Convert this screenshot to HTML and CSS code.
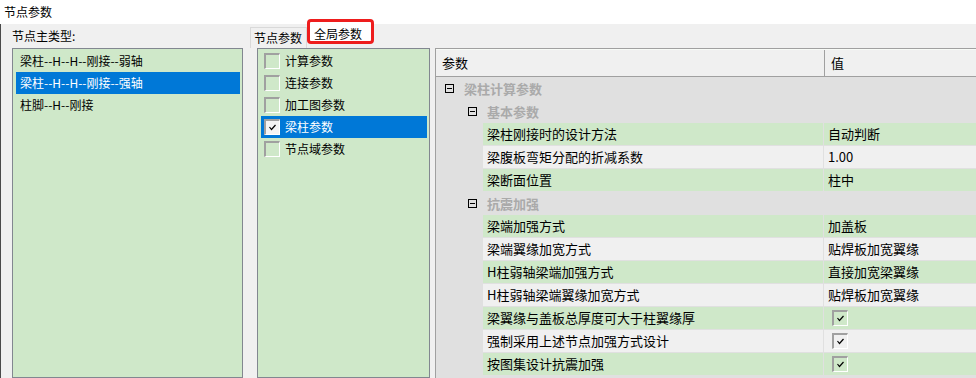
FILE: index.html
```html
<!DOCTYPE html>
<html>
<head>
  <meta charset="utf-8">
  <title>节点参数</title>
  <link rel="stylesheet" href="styles.css">
</head>
<body class="nd">
  <div class="nd-title">节点参数</div>
  <div class="nd-main">
    <div class="nd-types">
      <div class="nd-label">节点主类型:</div>
      <ul class="nd-list nd-typelist">
        <li>梁柱--H--H--刚接--弱轴</li>
        <li class="sel">梁柱--H--H--刚接--强轴</li>
        <li>柱脚--H--刚接</li>
      </ul>
    </div>

    <div class="nd-tabs">
      <div class="nd-tabbar">
        <span class="nd-tab">节点参数</span>
        <span class="nd-tab active">全局参数</span>
      </div>
      <div class="nd-page">
        <ul class="nd-list nd-checks">
          <li><span class="cb"></span>计算参数</li>
          <li><span class="cb"></span>连接参数</li>
          <li><span class="cb"></span>加工图参数</li>
          <li class="sel"><span class="cb on"><svg viewBox="0 0 13 13"><polyline points="3.5,6 5.5,8.5 9.5,4"/></svg></span>梁柱参数</li>
          <li><span class="cb"></span>节点域参数</li>
        </ul>

        <div class="nd-grid">
          <div class="g-head">
            <div class="h-name">参数</div>
            <div class="h-val">值</div>
          </div>
          <div class="g-group lv1"><i class="fold"></i>梁柱计算参数</div>
          <div class="g-group lv2"><i class="fold"></i>基本参数</div>
          <div class="g-row green"><div class="g-name">梁柱刚接时的设计方法</div><div class="g-val">自动判断</div></div>
          <div class="g-row"><div class="g-name">梁腹板弯矩分配的折减系数</div><div class="g-val">1.00</div></div>
          <div class="g-row green"><div class="g-name">梁断面位置</div><div class="g-val">柱中</div></div>
          <div class="g-group lv2"><i class="fold"></i>抗震加强</div>
          <div class="g-row green"><div class="g-name">梁端加强方式</div><div class="g-val">加盖板</div></div>
          <div class="g-row"><div class="g-name">梁端翼缘加宽方式</div><div class="g-val">贴焊板加宽翼缘</div></div>
          <div class="g-row green"><div class="g-name">H柱弱轴梁端加强方式</div><div class="g-val">直接加宽梁翼缘</div></div>
          <div class="g-row"><div class="g-name">H柱弱轴梁端翼缘加宽方式</div><div class="g-val">贴焊板加宽翼缘</div></div>
          <div class="g-row green"><div class="g-name">梁翼缘与盖板总厚度可大于柱翼缘厚</div><div class="g-val"><span class="cb on"><svg viewBox="0 0 13 13"><polyline points="3.5,6 5.5,8.5 9.5,4"/></svg></span></div></div>
          <div class="g-row"><div class="g-name">强制采用上述节点加强方式设计</div><div class="g-val"><span class="cb on"><svg viewBox="0 0 13 13"><polyline points="3.5,6 5.5,8.5 9.5,4"/></svg></span></div></div>
          <div class="g-row green"><div class="g-name">按图集设计抗震加强</div><div class="g-val"><span class="cb on"><svg viewBox="0 0 13 13"><polyline points="3.5,6 5.5,8.5 9.5,4"/></svg></span></div></div>
        </div>
      </div>
    </div>
  </div>
</body>
</html>
```

FILE: styles.css
```css
*,
*::before,
*::after {
  box-sizing: border-box;
}

.nd {
  margin: 0;
  height: 378px;
  overflow: hidden;
  display: flex;
  flex-direction: column;
  background: #f0f0f0;
  color: #000;
  font-family: "Noto Sans CJK SC", "Liberation Sans", sans-serif;
  font-size: 12px;
}

.nd-title {
  height: 24px;
  line-height: 24px;
  padding-left: 4px;
  background: #fff;
}

.nd-main {
  flex: 1;
  min-height: 0;
  display: flex;
  border-left: 1px solid #4a4a4a;
}

/* left: main type list */
.nd-types {
  width: 248px;
  display: flex;
  flex-direction: column;
  padding-left: 11px;
}

.nd-label {
  height: 24px;
  line-height: 24px;
}

.nd-list {
  margin: 0;
  padding: 1px 2px 0 3px;
  list-style: none;
  border: 1px solid #828790;
  background: #cfe8c9;
}

.nd-list li {
  height: 22px;
  line-height: 22px;
  padding-left: 4px;
  white-space: nowrap;
}

.nd-list li.sel {
  background: #0078d7;
  color: #fff;
}

.nd-typelist {
  width: 231px;
  flex: 1;
}

/* right: tabs */
.nd-tabs {
  flex: 1;
  display: flex;
  flex-direction: column;
}

.nd-tabbar {
  height: 24px;
  display: flex;
  align-items: flex-start;
  padding-left: 1px;
}

.nd-tab {
  margin-top: 3px;
  height: 21px;
  line-height: 20px;
  padding: 0 4px 0 3px;
  border-left: 1px solid #d9d9d9;
  border-top: 1px solid #d9d9d9;
  border-right: 1px solid #d9d9d9;
}

.nd-tab.active {
  margin-top: -5px;
  height: 25px;
  line-height: 17px;
  padding: 3px 9px 0 4px;
  background: #fff;
  border: 3px solid #ee1d1d;
  border-radius: 4px;
}

.nd-page {
  flex: 1;
  min-height: 0;
  display: flex;
  padding-left: 8px;
}

.nd-checks {
  width: 173px;
}

.nd-checks li {
  display: flex;
  align-items: center;
  padding-left: 3px;
}

.cb {
  width: 16px;
  height: 16px;
  flex: none;
  display: inline-flex;
  align-items: center;
  justify-content: center;
  border-style: solid;
  border-width: 2px 1px 1px 2px;
  border-color: #a0a0a0 #fff #fff #a0a0a0;
}

.nd-checks .cb {
  margin-right: 5px;
}

.nd-checks .cb.on {
  background: #f4f4f4;
}

.cb svg {
  width: 13px;
  height: 13px;
}

.cb polyline {
  fill: none;
  stroke: #000;
  stroke-width: 1.2;
}

/* property grid */
.nd-grid {
  flex: 1;
  margin-left: 5px;
  border-left: 1px solid #a0a0a0;
  border-top: 1px solid #a0a0a0;
  background: #e0e0e0;
  font-size: 13px;
}

.g-head {
  display: flex;
  height: 28px;
  line-height: 26px;
  border-top: 1px solid #f8fbf7;
  border-bottom: 1px solid #a0a0a0;
  background: #f0f0f0;
}

.h-name {
  width: 388px;
  padding-left: 6px;
}

.h-val {
  flex: 1;
  padding-left: 6px;
  border-left: 1px solid #a0a0a0;
}

.g-group {
  display: flex;
  align-items: center;
  height: 22px;
  margin-bottom: 1px;
  color: #aaa;
  font-weight: bold;
}

.g-group.lv1 {
  padding-left: 9px;
}

.g-group.lv2 {
  padding-left: 32px;
}

.fold {
  position: relative;
  width: 9px;
  height: 9px;
  margin-right: 10px;
  border: 1px solid #000;
}

.fold::after {
  content: "";
  position: absolute;
  left: 1px;
  right: 1px;
  top: 3px;
  height: 1px;
  background: #000;
}

.g-row {
  display: flex;
  height: 22px;
  line-height: 22px;
  margin-bottom: 1px;
  padding-left: 47px;
}

.g-name {
  width: 340px;
  padding-left: 4px;
  background: #f0f0f0;
}

.g-val {
  flex: 1;
  display: flex;
  align-items: center;
  margin-left: 1px;
  padding-left: 4px;
  background: #f0f0f0;
}

.g-row.green .g-name,
.g-row.green .g-val {
  background: #cfe8c9;
}

.g-val .cb {
  margin-left: 4px;
}
```
